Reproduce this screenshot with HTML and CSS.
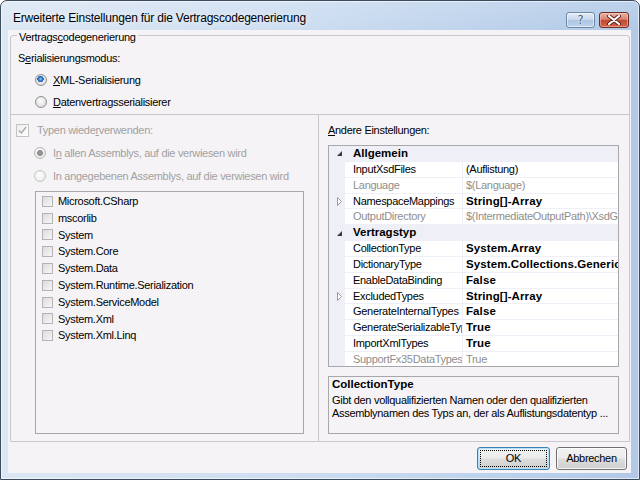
FILE: index.html
```html
<!DOCTYPE html>
<html lang="de">
<head>
<meta charset="utf-8">
<title>Erweiterte Einstellungen</title>
<link rel="stylesheet" href="styles.css">
</head>
<body>
<div class="window">
  <div class="titlebar">
    <span class="title">Erweiterte Einstellungen für die Vertragscodegenerierung</span>
    <div class="caption-buttons">
      <span class="cbtn help">?</span>
      <span class="cbtn close"><svg width="14" height="10" viewBox="0 0 14 10"><path d="M2 1 L12 9 M12 1 L2 9" stroke="#5a1f18" stroke-width="4" stroke-linecap="round"/><path d="M2 1 L12 9 M12 1 L2 9" stroke="#ffffff" stroke-width="2.2" stroke-linecap="round"/></svg></span>
    </div>
  </div>
  <div class="client">
    <div class="group">
      <div class="group-title">Vertrags<u>c</u>odegenerierung</div>
      <div class="mode">
        <div class="mode-label">S<u>e</u>rialisierungsmodus:</div>
        <div class="radio-row"><span class="radio checked"></span><span><u>X</u>ML-Serialisierung</span></div>
        <div class="radio-row"><span class="radio"></span><span><u>D</u>atenvertragsserialisierer</span></div>
      </div>
      <div class="split">
        <div class="pane-left">
          <div class="check-row disabled"><span class="check"><svg width="9" height="9" viewBox="0 0 9 9"><path d="M1 4.5 L3.5 7 L8 1" fill="none" stroke="#a8a8a8" stroke-width="1.4"/></svg></span><span>Typen wiede<u>r</u>verwenden:</span></div>
          <div class="opt-row disabled first"><span class="radio checked-grey"></span><span>I<u>n</u> allen Assemblys, auf die verwiesen wird</span></div>
          <div class="opt-row disabled"><span class="radio light"></span><span>In angegebenen Assemblys, auf die verwiesen wird</span></div>
          <div class="listbox">
            <div class="item"><span class="box"></span>Microsoft.CSharp</div>
            <div class="item"><span class="box"></span>mscorlib</div>
            <div class="item"><span class="box"></span>System</div>
            <div class="item"><span class="box"></span>System.Core</div>
            <div class="item"><span class="box"></span>System.Data</div>
            <div class="item"><span class="box"></span>System.Runtime.Serialization</div>
            <div class="item"><span class="box"></span>System.ServiceModel</div>
            <div class="item"><span class="box"></span>System.Xml</div>
            <div class="item"><span class="box"></span>System.Xml.Linq</div>
          </div>
        </div>
        <div class="pane-right">
          <div class="other-label"><u>A</u>ndere Einstellungen:</div>
          <div class="pgrid">
            <div class="prow cat"><span class="gutter"><svg class="tri" width="7" height="7" viewBox="0 0 7 7"><path d="M6 1 L6 6 L1 6 Z" fill="#3a3a3a"/></svg></span><span class="cname">Allgemein</span></div>
            <div class="prow"><span class="gutter"></span><span class="pname">InputXsdFiles</span><span class="pval">(Auflistung)</span></div>
            <div class="prow"><span class="gutter"></span><span class="pname grey">Language</span><span class="pval grey">$(Language)</span></div>
            <div class="prow"><span class="gutter"><svg class="tri" width="7" height="9" viewBox="0 0 7 9"><path d="M1.5 0.5 L5.5 4.5 L1.5 8.5 Z" fill="#ffffff" stroke="#9a9a9a"/></svg></span><span class="pname">NamespaceMappings</span><span class="pval b">String[]-Array</span></div>
            <div class="prow"><span class="gutter"></span><span class="pname grey">OutputDirectory</span><span class="pval grey">$(IntermediateOutputPath)\XsdGeneratedCode</span></div>
            <div class="prow cat"><span class="gutter"><svg class="tri" width="7" height="7" viewBox="0 0 7 7"><path d="M6 1 L6 6 L1 6 Z" fill="#3a3a3a"/></svg></span><span class="cname">Vertragstyp</span></div>
            <div class="prow"><span class="gutter"></span><span class="pname">CollectionType</span><span class="pval b">System.Array</span></div>
            <div class="prow"><span class="gutter"></span><span class="pname">DictionaryType</span><span class="pval b">System.Collections.Generic.Dictionary`2</span></div>
            <div class="prow"><span class="gutter"></span><span class="pname">EnableDataBinding</span><span class="pval b">False</span></div>
            <div class="prow"><span class="gutter"><svg class="tri" width="7" height="9" viewBox="0 0 7 9"><path d="M1.5 0.5 L5.5 4.5 L1.5 8.5 Z" fill="#ffffff" stroke="#9a9a9a"/></svg></span><span class="pname">ExcludedTypes</span><span class="pval b">String[]-Array</span></div>
            <div class="prow"><span class="gutter"></span><span class="pname">GenerateInternalTypes</span><span class="pval b">False</span></div>
            <div class="prow"><span class="gutter"></span><span class="pname">GenerateSerializableTypes</span><span class="pval b">True</span></div>
            <div class="prow"><span class="gutter"></span><span class="pname">ImportXmlTypes</span><span class="pval b">True</span></div>
            <div class="prow"><span class="gutter"></span><span class="pname grey">SupportFx35DataTypes</span><span class="pval grey">True</span></div>
          </div>
          <div class="desc">
            <div class="desc-title">CollectionType</div>
            <div class="desc-text">Gibt den vollqualifizierten Namen oder den qualifizierten<br>Assemblynamen des Typs an, der als Auflistungsdatentyp ...</div>
          </div>
        </div>
      </div>
    </div>
    <div class="buttons">
      <span class="btn default">OK</span>
      <span class="btn cancel">Abbrechen</span>
    </div>
  </div>
</div>
</body>
</html>
```
FILE: styles.css
```css
* { box-sizing: border-box; }
html, body { margin: 0; padding: 0; }
body {
  width: 640px; height: 480px; overflow: hidden;
  background: #ffffff;
  font-family: "Liberation Sans", Arial, sans-serif;
  font-size: 11px; color: #000;
  letter-spacing: -0.3px;
}
u { text-decoration: underline; text-underline-offset: 1px; }

.window {
  width: 640px; height: 480px;
  border: 1px solid #3b4a5c;
  border-radius: 7px 7px 0 0;
  background:
    linear-gradient(to bottom, rgba(255,255,255,0.15), rgba(255,255,255,0) 30px),
    linear-gradient(to right, #dce7f4 0%, #cddef1 45%, #b1c9e7 100%);
  display: flex; flex-direction: column;
  padding: 0 8px 6px 7px;
  box-shadow: inset 0 0 0 1px rgba(255,255,255,0.6);
}

.titlebar {
  height: 29px; flex: none;
  display: flex; justify-content: space-between; align-items: flex-start;
}
.title {
  padding: 9px 0 0 5px;
  font-size: 12px; line-height: 16px; color: #000;
  letter-spacing: -0.2px;
  text-shadow: 0 0 6px rgba(255,255,255,0.9);
}
.caption-buttons { display: flex; gap: 4px; margin-top: 11px; padding-right: 2px; }
.cbtn {
  height: 16px; border-radius: 3px;
  display: flex; align-items: center; justify-content: center;
}
.help {
  width: 29px;
  border: 1px solid #6f87a6;
  background: linear-gradient(#e3ecf7 0%, #c9d9ec 48%, #aec5e0 52%, #bcd3ec 100%);
  box-shadow: inset 0 0 0 1px rgba(255,255,255,0.55);
  font-family: "DejaVu Sans", sans-serif; font-size: 12px; line-height: 14px;
  letter-spacing: 0;
  color: #4a5d76;
  text-shadow: 0 0 2px #fff, 0 0 1px #fff;
}
.close {
  width: 30px;
  border: 1px solid #6e2d25;
  background: linear-gradient(#eab2a4 0%, #d98471 45%, #c24a35 52%, #d1644a 100%);
  box-shadow: inset 0 0 0 1px rgba(255,220,210,0.45);
}

.client {
  height: 443px; flex: none;
  background: #f6f3f6;
  display: flex; flex-direction: column;
}

.group {
  margin: 5px 0 0 2px;
  width: 620px; height: 407px;
  border: 1px solid #c9c7cb;
  border-radius: 3px 3px 0 0;
  display: flex; flex-direction: column;
}
.group-title {
  width: max-content;
  margin: -5px 0 0 6px;
  padding: 0 2px;
  height: 13px; line-height: 13px;
  background: #f6f3f6;
}
.mode { padding: 8px 0 1px 7px; }
.mode-label { height: 13px; line-height: 13px; }
.radio-row {
  height: 22px; padding-left: 17px;
  display: flex; align-items: center; gap: 6px;
}
.mode-label + .radio-row { margin-top: 4px; }

.radio {
  width: 12px; height: 12px; flex: none;
  border-radius: 50%;
  border: 1px solid #8f9093;
  background: radial-gradient(circle at 45% 40%, #ffffff 0%, #eaeaea 45%, #cfcfcf 100%);
}
.radio.checked {
  background:
    radial-gradient(circle at 45% 40%, #9fd0ff 0, #3b86d4 1.6px, #1f5ca6 3px, transparent 3.4px),
    radial-gradient(circle at 45% 40%, #ffffff 0%, #eaeaea 45%, #cfcfcf 100%);
}
.radio.checked-grey {
  border-color: #b8b8b8;
  background:
    radial-gradient(circle, #9a9a9a 0, #8a8a8a 2.6px, transparent 3.2px),
    radial-gradient(circle at 45% 40%, #ffffff 0%, #f0f0f0 50%, #dedede 100%);
}
.radio.light {
  border-color: #c6c6c6;
  background: radial-gradient(circle at 45% 40%, #ffffff 0%, #f3f3f3 50%, #e2e2e2 100%);
}

.split {
  flex: 1;
  border-top: 1px solid #c9c7cb;
  display: grid;
  grid-template-columns: 308px 310px;
}
.pane-left {
  border-right: 1px solid #c9c7cb;
  padding: 7px 0 0 0;
  display: flex; flex-direction: column;
}
.disabled { color: #a1a1a1; }
.check-row {
  height: 16px; padding-left: 5px;
  display: flex; align-items: center; gap: 8px;
}
.check {
  width: 13px; height: 13px; flex: none;
  border: 1px solid #c3c3c3;
  background: linear-gradient(135deg, #ececec, #ffffff);
  display: flex; align-items: center; justify-content: center;
}
.opt-row {
  height: 23px; padding-left: 23px;
  display: flex; align-items: center; gap: 7px;
}
.opt-row.first { margin-top: 3px; }
.listbox {
  margin: 4px 0 0 24px;
  width: 269px; height: 243px;
  border: 1px solid #a8a7ab;
  padding-top: 1px;
}
.item {
  height: 16.8px; line-height: 16.8px;
  padding-left: 6px;
  display: flex; align-items: center; gap: 5px;
  white-space: nowrap;
}
.box {
  width: 11px; height: 11px; flex: none;
  border: 1px solid #b4b4b4;
  background: linear-gradient(135deg, #dcdcdc, #f7f7f7);
}

.pane-right {
  padding: 8px 0 0 9px;
  display: flex; flex-direction: column;
}
.other-label { height: 14px; line-height: 14px; }
.pgrid {
  margin-top: 8px;
  width: 291px; height: 222px;
  border: 1px solid #a8a7ab;
  background: #ffffff;
  overflow: hidden;
}
.prow {
  height: 15.85px; line-height: 15px;
  display: grid;
  grid-template-columns: 16px 118px 1fr;
  white-space: nowrap;
}
.prow.cat { grid-template-columns: 16px 1fr; background: #eff0f7; }
.gutter {
  background: #eff0f7;
  display: flex; align-items: center; justify-content: flex-start;
  padding-left: 7px;
}
.pname, .pval, .cname {
  overflow: hidden;
  border-bottom: 1px solid #eff0f7;
}
.pname { padding-left: 8px; border-right: 1px solid #eff0f7; }
.pval { padding-left: 3px; }
.cname { padding-left: 8px; font-weight: bold; font-size: 11.5px; letter-spacing: 0; }
.b { font-weight: bold; font-size: 11.5px; letter-spacing: 0.1px; }
.grey { color: #8e8e8e; }

.desc {
  margin-top: 9px;
  width: 291px; height: 58px;
  border: 1px solid #a8a7ab;
  padding: 0 0 0 3px;
  white-space: nowrap;
}
.desc-title { font-weight: bold; font-size: 11.5px; line-height: 14px; letter-spacing: 0; }
.desc-text { margin-top: 3px; line-height: 13px; }

.buttons {
  margin-top: 5px;
  display: flex; justify-content: flex-end; gap: 6px;
  padding-right: 4px;
}
.btn {
  height: 23px;
  border: 1px solid #707070;
  border-radius: 3px;
  background: linear-gradient(#f2f2f2 0%, #ebebeb 48%, #dddddd 52%, #cfcfcf 100%);
  box-shadow: inset 0 0 0 1px rgba(255,255,255,0.8);
  display: flex; align-items: center; justify-content: center;
  line-height: 13px;
}
.btn.default {
  width: 73px;
  border-color: #3c7fb1;
  box-shadow: inset 0 0 0 1px #b4e2f9;
  outline: 1px dotted #000;
  outline-offset: -4px;
}
.btn.cancel { width: 71px; }
```
